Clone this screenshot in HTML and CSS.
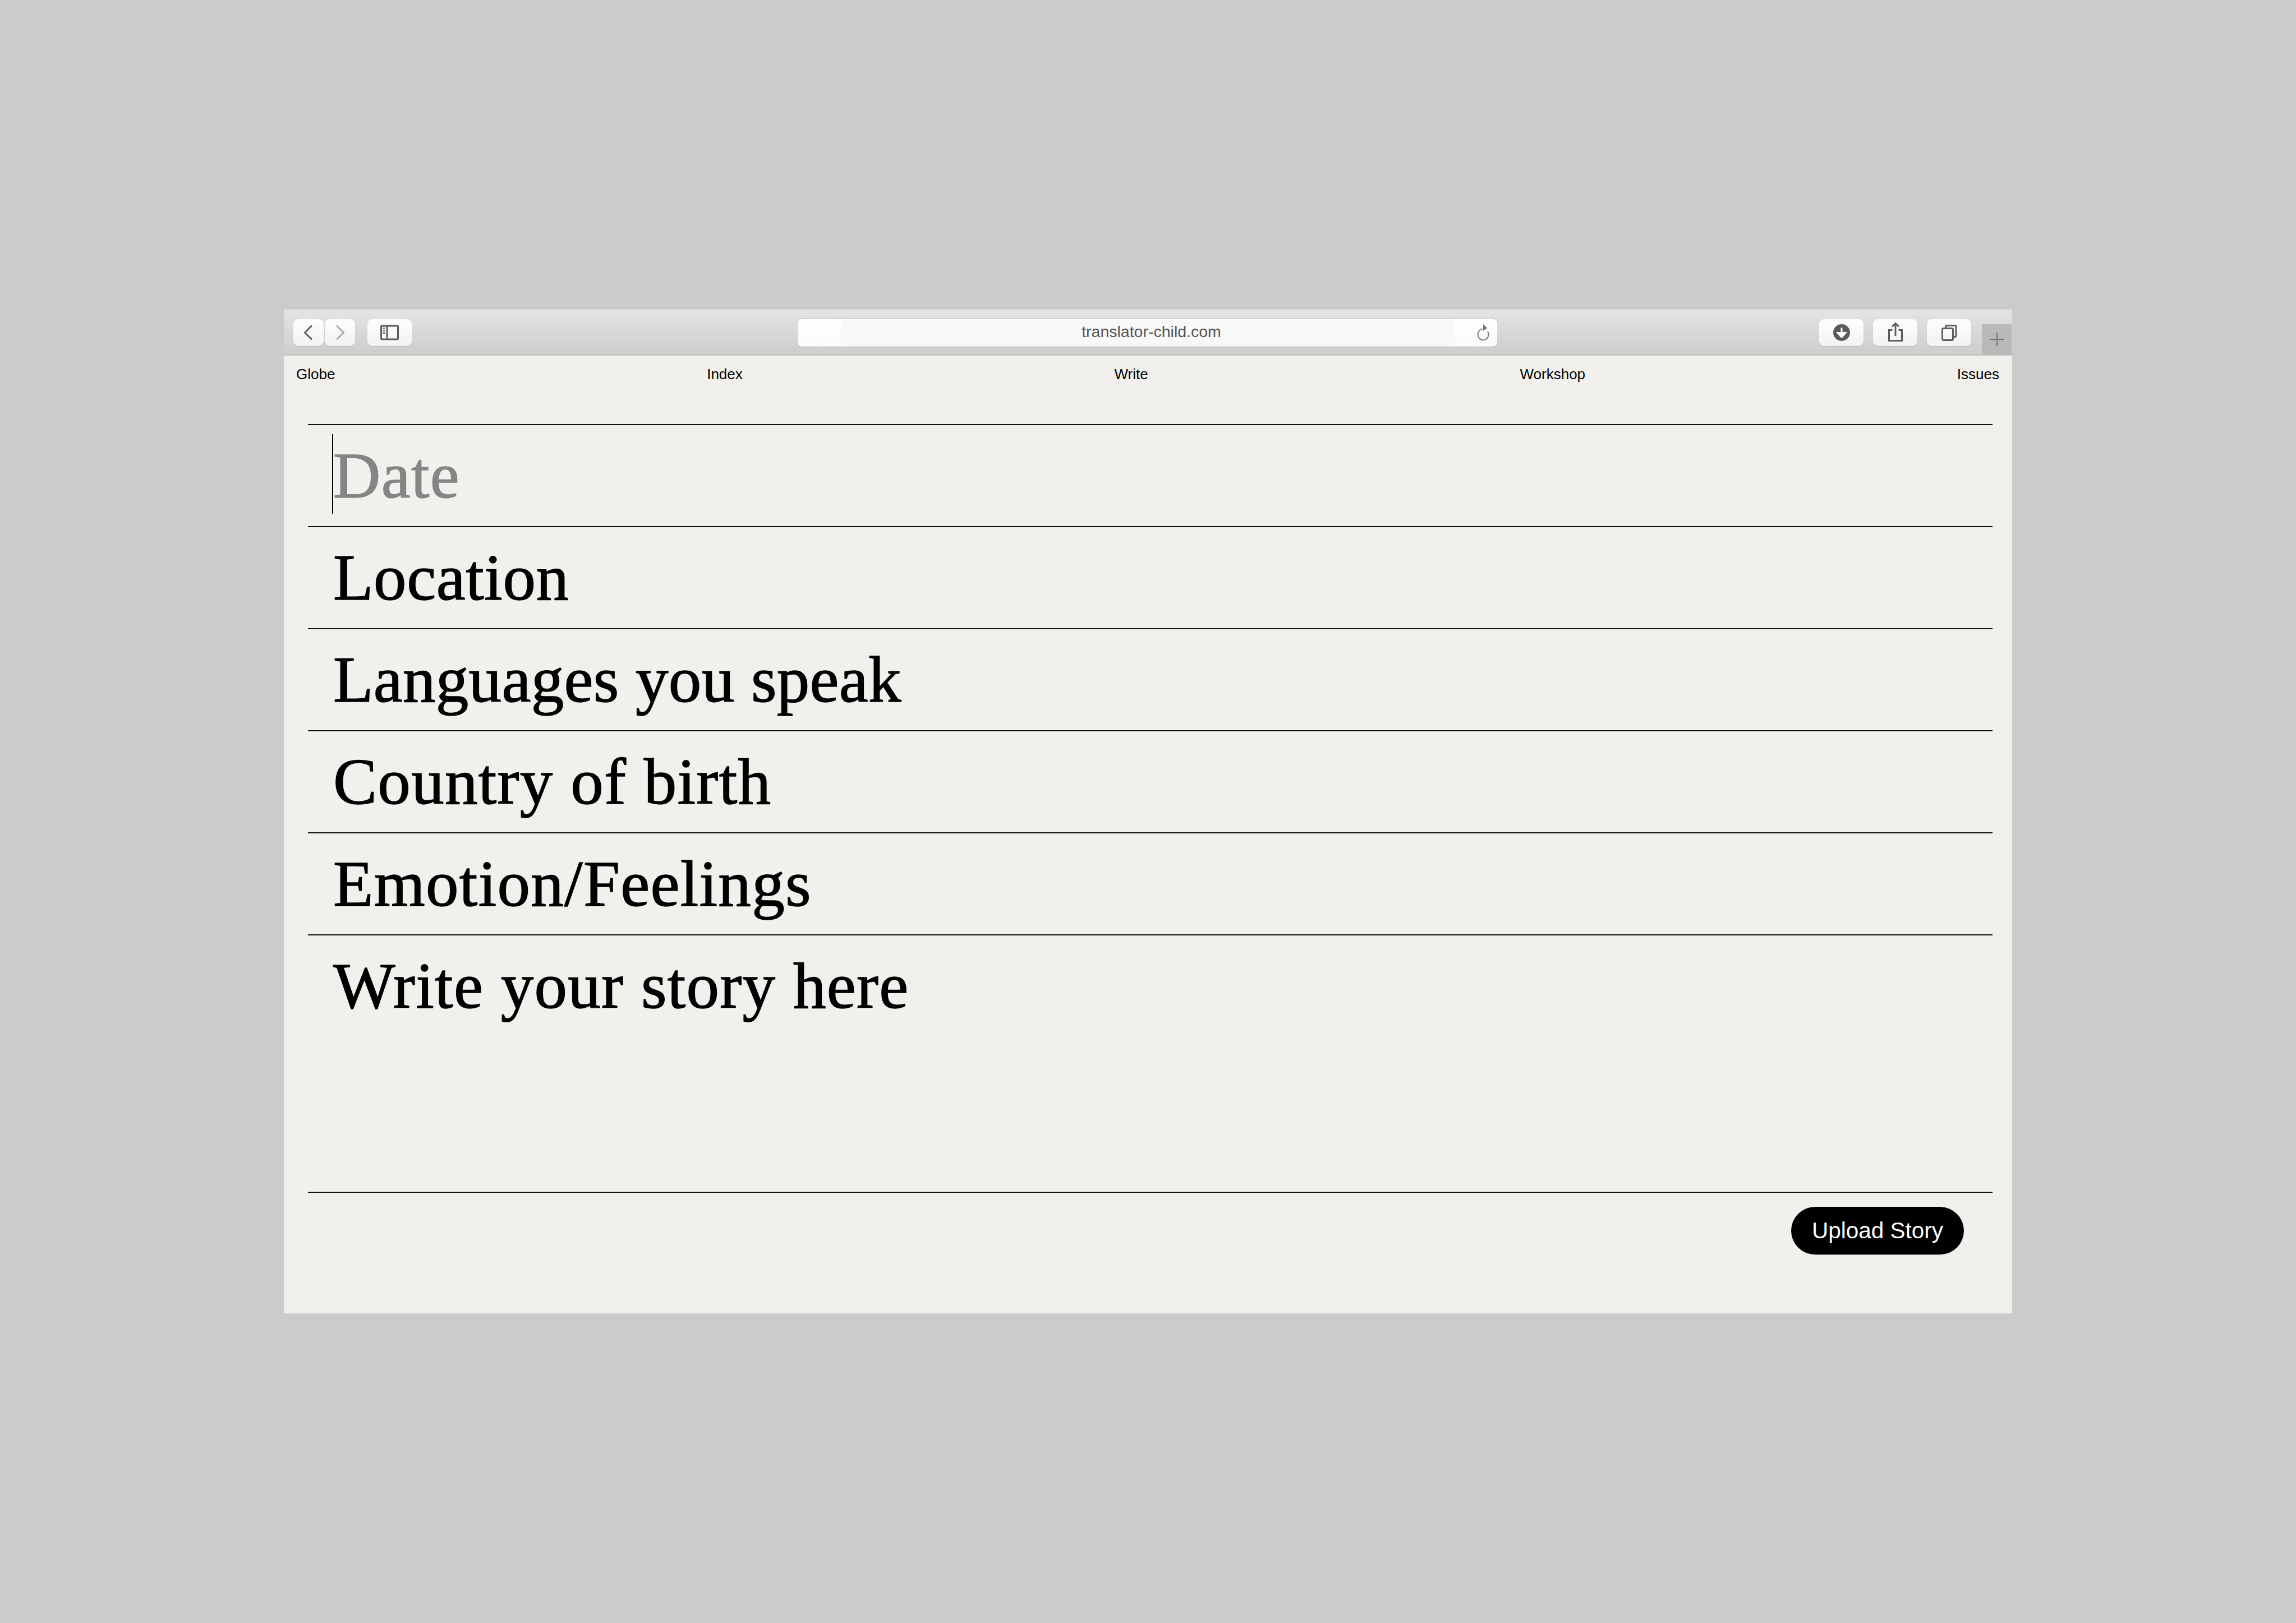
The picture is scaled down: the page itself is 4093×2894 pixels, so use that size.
FILE: index.html
```html
<!DOCTYPE html>
<html lang="en">
<head>
<meta charset="utf-8">
<title>translator-child.com</title>
<link rel="stylesheet" href="styles.css">
</head>
<body>
<main class="window">
  <header class="toolbar">
    <div class="group left">
      <div class="nav-pair">
        <button class="tb-btn narrow"><svg width="54" height="48" viewBox="0 0 54 48"><path d="M33 11.500 L20.500 24 L33 36.500" class="ic dark"/></svg></button>
        <button class="tb-btn narrow"><svg width="54" height="48" viewBox="0 0 54 48"><path d="M21 11.500 L33.500 24 L21 36.500" class="ic light"/></svg></button>
      </div>
      <button class="tb-btn"><svg width="79" height="48" viewBox="0 0 79 48"><rect x="24.500" y="12" width="30" height="24" rx="1.500" class="ic dark"/><path d="M35 12V36" class="ic dark"/><path d="M27.500 16.500h4M27.500 20.500h4M27.500 24.500h4" class="ic mid"/></svg></button>
    </div>
    <div class="url">
      <div class="url-inner"></div>
      <span class="url-text">translator-child.com</span>
      <svg class="reload" width="24" height="32" viewBox="0 0 24 32"><path d="M10.500 9.500A9.500 10 0 1 0 20 14" class="ic thin"/><path d="M12 1 L19 8 L12 13Z" class="fill-mid"/></svg>
    </div>
    <div class="group right">
      <button class="tb-btn"><svg width="79" height="48" viewBox="0 0 79 48"><circle cx="40" cy="24" r="15" class="fill-dark"/><path d="M40 15.500V29M33 24.500 L40 32 L47 24.500Z" class="arrow"/></svg></button>
      <button class="tb-btn"><svg width="80" height="48" viewBox="0 0 80 48"><path d="M34.500 19.500H28.500V38.500H51.500V19.500H45.500" class="ic dark"/><path d="M40 30V8M34 13.500 L40 7.500 L46 13.500" class="ic dark"/></svg></button>
      <button class="tb-btn"><svg width="79" height="48" viewBox="0 0 79 48"><rect x="27.500" y="16.500" width="19" height="21" rx="2.500" class="ic dark"/><path d="M33.500 16V13.500Q33.500 11.500 35.500 11.500H50Q52 11.500 52 13.500V29Q52 31.500 50 31.500H47" class="ic dark"/></svg></button>
    </div>
    <div class="new-tab"><svg width="26" height="26" viewBox="0 0 26 26"><path d="M13 1V25M1 13H25" class="plus"/></svg></div>
  </header>

  <nav class="site-nav">
    <a>Globe</a>
    <a>Index</a>
    <a>Write</a>
    <a>Workshop</a>
    <a>Issues</a>
  </nav>

  <section class="form">
    <div class="row placeholder"><span class="caret"></span>Date</div>
    <div class="row snug">Location</div>
    <div class="row tight">Languages you speak</div>
    <div class="row">Country of birth</div>
    <div class="row">Emotion/Feelings</div>
    <div class="row story">Write your story here</div>
  </section>

  <div class="actions">
    <button class="upload">Upload Story</button>
  </div>
</main>
</body>
</html>
```

FILE: styles.css
```css
* { box-sizing: border-box; }

html, body { margin: 0; }

body {
  width: 4093px;
  height: 2894px;
  padding: 552px 506px 0;
  background: #cbcbcb;
  font-family: "Liberation Sans", Arial, sans-serif;
}

.window {
  width: 3081px;
  height: 1790px;
  background: #f1f0ec;
  overflow: hidden;
}

/* Browser chrome */
.toolbar {
  position: relative;
  display: flex;
  align-items: flex-start;
  height: 82px;
  padding: 16px 0 0 17px;
  background: linear-gradient(#e5e5e5, #dfdfdf 20%, #cdcdcd);
  border-top: 1px solid #ececec;
  border-bottom: 2px solid #bdbdbb;
}

.group { display: flex; }
.group.left { gap: 22px; width: 900px; }
.group.right { gap: 17px; margin-left: 574px; }

.nav-pair { display: flex; gap: 2px; }

.tb-btn {
  display: block;
  width: 79px;
  height: 48px;
  padding: 0;
  border: 0;
  border-radius: 9px;
  background: linear-gradient(#fdfdfd, #f3f3f3);
  box-shadow: 0 1px 1px #b5b5b5;
}
.tb-btn.narrow { width: 54px; }
.tb-btn svg { display: block; }

.ic { fill: none; stroke-width: 3; }
.ic.dark { stroke: #5c5c5c; }
.ic.mid { stroke: #808080; }
.ic.light { stroke: #ababab; }
.ic.thin { stroke: #808080; stroke-width: 2; }
.fill-dark { fill: #5a5a5a; }
.fill-mid { fill: #707070; }
.arrow { fill: #fff; stroke: #fff; stroke-width: 3; }
.plus { fill: none; stroke: #757575; stroke-width: 2; }

.url {
  position: relative;
  display: flex;
  align-items: center;
  justify-content: center;
  width: 1247px;
  height: 49px;
  margin-left: -1px;
  border-radius: 7px;
  background: linear-gradient(#fff, #fafafa);
  box-shadow: 0 1px 1px #a9a9a9, 0 -1px 0 #c8c8c8;
  font-size: 28.5px;
  line-height: 45px;
  color: #555;
}
.url-inner {
  position: absolute;
  left: 77px;
  right: 76px;
  top: 1px;
  bottom: 1px;
  border-radius: 10px;
  background: #f8f8f8;
}
.url-text { position: relative; left: 7px; top: -2px; }
.reload { position: absolute; right: 13px; top: 8px; }

.new-tab {
  position: absolute;
  right: 1px;
  bottom: 0;
  display: flex;
  align-items: center;
  justify-content: center;
  width: 53px;
  height: 54px;
  background: #b9b9b9;
}

/* Site navigation */
.site-nav {
  display: flex;
  justify-content: space-between;
  height: 122px;
  padding: 18px 23px 0 22px;
  font-size: 26px;
  line-height: 30px;
  color: #000;
}

/* Form */
.form {
  margin: 0 35px 0 43px;
  font-family: "Liberation Serif", "Times New Roman", serif;
  font-size: 117px;
  letter-spacing: 1.3px;
  color: #000;
  -webkit-text-stroke: 1.4px currentColor;
}

.row {
  position: relative;
  height: 182px;
  padding-left: 45px;
  border-top: 2px solid #111;
  line-height: 180px;
  white-space: nowrap;
}
.row.snug { letter-spacing: 0.6px; }
.row.tight { letter-spacing: 0.3px; }
.row.placeholder { color: #858585; }
.row.story {
  height: 461px;
  border-bottom: 2px solid #111;
}

.caret {
  position: absolute;
  left: 43px;
  top: 16px;
  width: 2px;
  height: 142px;
  background: #000;
}

.actions {
  display: flex;
  justify-content: flex-end;
  padding: 25px 86px 0 0;
}

.upload {
  width: 308px;
  height: 85px;
  padding: 0;
  border: 0;
  border-radius: 43px;
  background: #000;
  color: #fff;
  font-family: "Liberation Sans", Arial, sans-serif;
  font-size: 40.5px;
}
```
